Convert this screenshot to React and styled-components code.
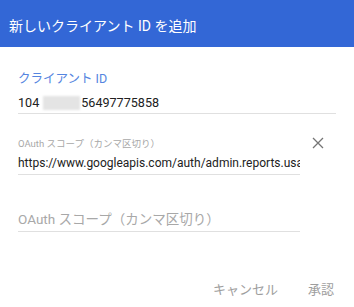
import React from "react";
import styled, { createGlobalStyle } from "styled-components";

const Global = createGlobalStyle`
  html, body { margin: 0; padding: 0; background: #fff; }
  body { font-family: Roboto, "Noto Sans CJK JP", sans-serif; }
`;

const Dialog = styled.div`
  width: 354px;
  height: 307px;
  display: flex;
  flex-direction: column;
  background: #fff;
  overflow: hidden;
`;

const Header = styled.div`
  height: 47px;
  background: #3367d6;
  color: #fff;
  font-size: 14px;
  display: flex;
  align-items: center;
  padding: 2px 0 0 9px;
  box-sizing: border-box;
`;

const Body = styled.div`
  display: flex;
  flex-direction: column;
  padding: 0 0 0 18px;
`;

const Field = styled.div`
  display: flex;
  flex-direction: column;
  width: ${(p) => p.$w}px;
  margin-top: ${(p) => p.$mt}px;
  border-bottom: 1px solid #e0e0e0;
`;

const Label = styled.div`
  font-size: ${(p) => p.$size}px;
  color: ${(p) => p.$color};
  line-height: ${(p) => p.$lh}px;
`;

const Value = styled.div`
  font-size: ${(p) => p.$size}px;
  color: #212121;
  line-height: 18px;
  margin-top: ${(p) => p.$mt}px;
  padding-bottom: ${(p) => p.$pb}px;
  white-space: nowrap;
  overflow: hidden;
  display: flex;
  align-items: center;
`;

const Blur = styled.span`
  display: inline-block;
  width: 37px;
  height: 14px;
  margin: 0 1px 0 4px;
  background: #e4e4e4;
  filter: blur(1px);
`;

const Row = styled.div`
  display: flex;
  align-items: flex-start;
`;

const Close = styled.div`
  margin-left: 12px;
  margin-top: 23px;
  width: 12px;
  height: 12px;
  display: flex;
`;

const Actions = styled.div`
  margin-top: auto;
  display: flex;
  justify-content: flex-end;
  align-items: center;
  height: 38px;
  padding-right: 20px;
  gap: 30px;
`;

const Btn = styled.div`
  font-size: 13px;
  color: #9e9e9e;
`;

export default function App() {
  return (
    <>
      <Global />
      <Dialog>
        <Header>新しいクライアント ID を追加</Header>
        <Body>
          <Field $w={318} $mt={23}>
            <Label $size={12.5} $color="#5585e0" $lh={18}>クライアント ID</Label>
            <Value $size={12.6} $mt={6} $pb={1}>
              104<Blur />56497775858
            </Value>
          </Field>
          <Row>
            <Field $w={282} $mt={23}>
              <Label $size={9.5} $color="#a8a8a8" $lh={14}>OAuth スコープ（カンマ区切り）</Label>
              <Value $size={12} $mt={3} $pb={2}>
                https://www.googleapis.com/auth/admin.reports.usa
              </Value>
            </Field>
            <Close>
              <svg width="12" height="12" viewBox="0 0 12 12">
                <path d="M1 1 L11 11 M11 1 L1 11" stroke="#757575" strokeWidth="1.3" fill="none" />
              </svg>
            </Close>
          </Row>
          <Field $w={282} $mt={34}>
            <Label $size={13.5} $color="#a8a8a8" $lh={20} style={{ paddingBottom: 2 }}>
              OAuth スコープ（カンマ区切り）
            </Label>
          </Field>
        </Body>
        <Actions>
          <Btn>キャンセル</Btn>
          <Btn>承認</Btn>
        </Actions>
      </Dialog>
    </>
  );
}
